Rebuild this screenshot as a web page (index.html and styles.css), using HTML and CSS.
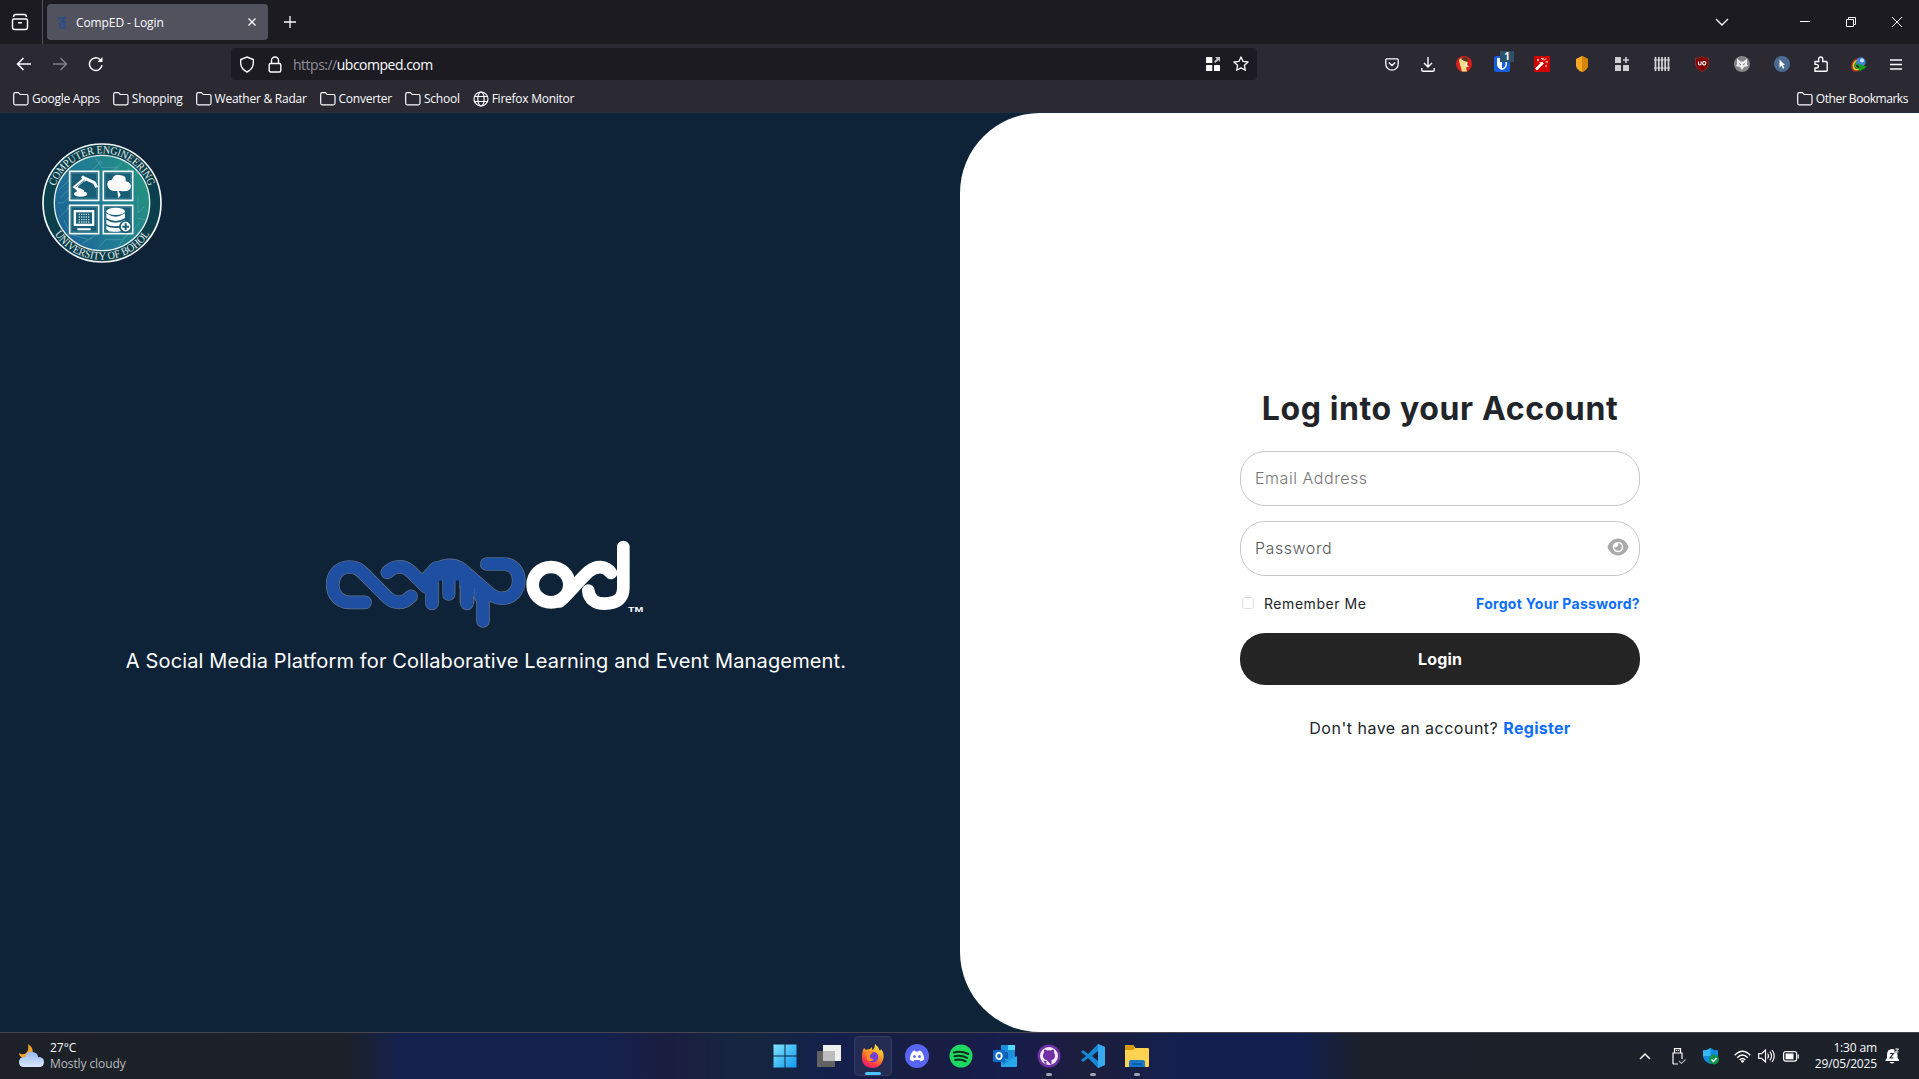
FILE: index.html
```html
<!DOCTYPE html>
<html lang="en">
<head>
<meta charset="utf-8">
<title>CompED - Login</title>
<link rel="stylesheet" href="styles.css">
</head>
<body>
<svg class="defs" aria-hidden="true">
  <symbol id="folder" viewBox="0 0 16 14"><path d="M.7 11.3V2.2Q.7.7 2.2.7h3.2l1.8 1.8h6.3q1.5 0 1.5 1.5v7.3q0 1.500-1.500 1.500H2.200Q.7 12.800.7 11.300z" fill="none" stroke="currentColor" stroke-width="1.200"/></symbol>
</svg>

<header class="browser">
  <div class="tabstrip">
    <div class="firefox-view"><svg width="18" height="18" viewBox="0 0 18 18" fill="none" stroke="currentColor" stroke-width="1.500"><path d="M4 1.500h10M2.800 6h12.400q1.300 0 1.300 1.200v7q0 2.300-2.300 2.300H3.800q-2.300 0-2.300-2.300v-7Q1.500 6 2.800 6zM7 9.700h4M2.500 4q.3-2.500 2-2.500M15.500 4q-.3-2.500-2-2.500"/></svg></div>
    <div class="tab">
      <svg width="14" height="14" viewBox="0 0 14 14"><path d="M1 2h6l2-1 2 2-3 2 3 2-2 2 2 3-2 2-7-1 2-2-2-3 2-2z" fill="#2f4b86"/><path d="M3 3l3 2-3 2 4 2-2 2 5 1" stroke="#52525e" fill="none"/></svg>
      <span class="tab-title">CompED - Login</span>
      <svg width="8" height="8" viewBox="0 0 8 8" stroke="currentColor" stroke-width="1.300"><path d="M.5.5l7 7M7.500.5l-7 7"/></svg>
    </div>
    <svg class="new-tab" width="12" height="12" viewBox="0 0 12 12" stroke="currentColor" stroke-width="1.300"><path d="M0 6h12M6 0v12"/></svg>
    <div class="window-controls">
      <svg class="all-tabs" width="14" height="14" viewBox="0 0 14 14" fill="none" stroke="currentColor" stroke-width="1.400"><path d="M1 4l6 6 6-6"/></svg>
      <svg width="10" height="10" viewBox="0 0 10 10" stroke="currentColor"><path d="M0 4.500h10"/></svg>
      <svg width="10" height="10" viewBox="0 0 10 10" fill="none" stroke="currentColor"><path d="M.5 2.500h7v7h-7zM2.500 2.500v-2h7v7h-2"/></svg>
      <svg width="10" height="10" viewBox="0 0 10 10" stroke="currentColor"><path d="M0 0l10 10M10 0L0 10"/></svg>
    </div>
  </div>

  <div class="navbar">
    <div class="nav-buttons">
      <svg width="16" height="16" viewBox="0 0 16 16" fill="none" stroke="currentColor" stroke-width="1.500"><path d="M15 8H1.500M7.500 2l-6 6 6 6"/></svg>
      <svg class="disabled" width="16" height="16" viewBox="0 0 16 16" fill="none" stroke="currentColor" stroke-width="1.500"><path d="M1 8h13.500M8.500 2l6 6-6 6"/></svg>
      <svg width="16" height="16" viewBox="0 0 16 16" fill="none" stroke="currentColor" stroke-width="1.500"><path d="M14 9a6.300 6.300 0 1 1-2-5.500l1.500 1.500"/><path d="M14.500 1v5h-5z" fill="currentColor" stroke="none"/></svg>
    </div>
    <div class="urlbar">
      <svg width="16" height="17" viewBox="0 0 16 17" fill="none" stroke="currentColor" stroke-width="1.400"><path d="M8 1l6.300 2.500v4Q14 13 8 16 2 13 1.700 7.500v-4z"/></svg>
      <svg class="lock" width="14" height="17" viewBox="0 0 14 17" fill="none" stroke="currentColor" stroke-width="1.400"><rect x="1.200" y="7.500" width="11.600" height="8.500" rx="1.500"/><path d="M3.500 7.500V4.500a3.500 3.500 0 0 1 7 0v3"/></svg>
      <span class="url"><span class="scheme">https://</span>ubcomped.com</span>
      <svg class="apps" width="14" height="14" viewBox="0 0 14 14" fill="currentColor"><rect width="6.300" height="6" rx=".6"/><rect y="8" width="6.300" height="6" rx=".6"/><rect x="8" y="8" width="6" height="6" rx=".6"/><path d="M9 0h5v5l-1.700-1.700L9.300 6 8 4.800l2.700-3.100z" opacity=".75"/></svg>
      <svg width="16" height="16" viewBox="0 0 16 16" fill="none" stroke="currentColor" stroke-width="1.300" stroke-linejoin="round"><path d="M8 .9l2.100 4.500 5 .6-3.700 3.300 1 5L8 11.900l-4.400 2.400 1-5L.9 6l5-.6z"/></svg>
    </div>
    <div class="extensions">
      <span class="ext narrow"><svg width="14" height="13" viewBox="0 0 14 13" fill="none" stroke="currentColor" stroke-width="1.300"><path d="M2 .8h10q1.200 0 1.200 1.200v4a6.200 6.200 0 0 1-12.400 0V2Q.8.8 2 .8zM3.800 4.500L7 7.500l3.200-3"/></svg></span>
      <span class="ext narrow"><svg width="14" height="15" viewBox="0 0 14 15" fill="none" stroke="currentColor" stroke-width="1.400"><path d="M7 0v10M3 6l4 4 4-4M.8 11v2q0 1.200 1.200 1.200h10q1.200 0 1.200-1.200v-2"/></svg></span>
      <span class="ext narrow"><svg width="16" height="16" viewBox="0 0 16 16"><circle cx="8" cy="8" r="8" fill="#d91e1e"/><path d="M3 4q2-3 5-1.500l4 3-1 3 2 2-3 1 1 4H6L4 9z" fill="#f2dc86"/><path d="M5 3q4-4 7 0v3L8 5z" fill="#5a3a1c"/><path d="M8 8l3-1v4z" fill="#e9f2f5"/></svg></span>
      <span class="ext bitwarden"><svg width="16" height="16" viewBox="0 0 16 16"><rect width="16" height="16" rx="2" fill="#175ddc"/><path d="M3 2h10v6q0 4-5 6-5-2-5-6z" fill="#fff"/><path d="M8 3.500h3.500V8q0 3-3.500 4.500z" fill="#175ddc"/></svg><span class="badge">1</span></span>
      <span class="ext"><svg width="16" height="16" viewBox="0 0 16 16"><path fill="#d00000" d="M0 0h16v16H0z"/><path d="M2 13.500L9 6.500" stroke="#fff" stroke-width="2.600"/><path d="M3 4h2M4 3v2M7 2.500h1.500M10 4.500l2-2M11.500 6H14M12 9v2M9 2v2M5.500 6l1 1" stroke="#fff"/></svg></span>
      <span class="ext"><svg width="14" height="16" viewBox="0 0 14 16"><path d="M7 0l6 3v7q-1 4-6 6-5-2-6-6V3z" fill="#f8a825"/><path d="M7 0l6 3v7q-1 4-6 6z" fill="#d78506"/></svg></span>
      <span class="ext"><svg width="14" height="14" viewBox="0 0 14 14" fill="#cfcfd3"><rect width="6" height="6" rx=".5"/><rect y="8" width="6" height="6" rx=".5"/><rect x="8" y="8" width="6" height="6" rx=".5"/><path d="M10.200 0h1.600v2.200H14v1.600h-2.200V6h-1.600V3.800H8V2.200h2.200z"/></svg></span>
      <span class="ext"><svg width="16" height="14" viewBox="0 0 16 14" stroke="#d4d4d8"><path d="M1.500 0v14M4.800 0v14M8 0v14M11.200 0v14M14.500 0v14" stroke-width="1.700"/><path d="M0 3h16M0 11h16" stroke-width="1.100"/></svg></span>
      <span class="ext"><svg width="14" height="16" viewBox="0 0 14 16"><path d="M7 .5Q10 2.500 13.500 2v6.500Q13 13 7 15.500 1 13 .5 8.500V2Q4 2.500 7 .5z" fill="#800000" stroke="#8f3a3a" stroke-width=".7"/><path d="M3.500 5.500v2.300q0 1.200 1.300 1.200t1.300-1.200V5.500" fill="none" stroke="#fff" stroke-width="1.100"/><rect x="7.700" y="5.600" width="3.100" height="3.300" rx="1.300" fill="none" stroke="#fff" stroke-width="1.100"/></svg></span>
      <span class="ext"><svg width="16" height="16" viewBox="0 0 16 16"><circle cx="8" cy="8" r="8" fill="#858588"/><path d="M3 2.500l3.500 3h3l3.500-3v6l1 1.500-4 1-2 3-2-3-4-1 1-1.500z" fill="#ededed"/><path d="M5 7.500l2 1.500M11 7.500L9 9" stroke="#777"/></svg></span>
      <span class="ext"><svg width="16" height="16" viewBox="0 0 16 16"><circle cx="8" cy="8" r="8" fill="#4c6b93"/><path d="M5.500 3.500l5.500 5.500H8.900l1.500 3-1.500.7-1.400-2.900-2 1.700z" fill="#fff"/></svg></span>
      <span class="ext mid"><svg width="14" height="16" viewBox="0 0 14 16" fill="none" stroke="currentColor" stroke-width="1.400"><path d="M1 5.500h3.700V3a2 2 0 0 1 4 0v2.500H12q1.200 0 1.200 1.200v7.600q0 1-1 1H1v-3.300h1.500a1.800 1.800 0 0 0 0-3.600H1z"/></svg></span>
      <span class="ext mid"><svg width="16" height="15" viewBox="0 0 16 15"><path d="M8 13Q0 16 1 8 2 2 8 2" fill="none" stroke="#c03025" stroke-width="1.500"/><path d="M8 12Q2 14 2.500 8 3 4 8 3" fill="none" stroke="#e8d32a" stroke-width="1.700"/><path d="M9 11.500Q4 12 4.500 8 5 5 8 4" fill="none" stroke="#2ba82e" stroke-width="1.500"/><circle cx="10" cy="5" r="4.700" fill="#3f82d8"/><circle cx="11" cy="3.500" r="2" fill="#cfe6f5"/><path d="M6 6.500l10 3.200-8 5 1-3.500z" fill="#12a318"/></svg></span>
      <span class="ext menu"><svg width="12" height="11" viewBox="0 0 12 11" stroke="currentColor" stroke-width="1.300"><path d="M0 1h12M0 5.500h12M0 10h12"/></svg></span>
    </div>
  </div>

  <nav class="bookmarks">
    <a class="bookmark"><svg width="16" height="14"><use href="#folder"/></svg><span>Google Apps</span></a>
    <a class="bookmark"><svg width="16" height="14"><use href="#folder"/></svg><span>Shopping</span></a>
    <a class="bookmark"><svg width="16" height="14"><use href="#folder"/></svg><span>Weather &amp; Radar</span></a>
    <a class="bookmark"><svg width="16" height="14"><use href="#folder"/></svg><span>Converter</span></a>
    <a class="bookmark"><svg width="16" height="14"><use href="#folder"/></svg><span>School</span></a>
    <a class="bookmark"><svg width="16" height="16" viewBox="0 0 16 16" fill="none" stroke="currentColor" stroke-width="1.200"><circle cx="8" cy="8" r="7"/><ellipse cx="8" cy="8" rx="3.200" ry="7"/><path d="M1.500 5.500h13M1.500 10.500h13"/></svg><span>Firefox Monitor</span></a>
    <a class="bookmark other"><svg width="16" height="14"><use href="#folder"/></svg><span>Other Bookmarks</span></a>
  </nav>
</header>

<main class="page">
  <section class="intro">
    <svg class="seal" width="120" height="120" viewBox="-180 -180 360 360">
      <defs>
        <linearGradient id="sealFill" x1="0" y1=".7" x2="1" y2=".3"><stop offset="0" stop-color="#1c6397"/><stop offset=".5" stop-color="#207e94"/><stop offset="1" stop-color="#24917e"/></linearGradient>
        <path id="arcTop" d="M-149 0A149 149 0 0 1 149 0"/>
        <path id="arcBottom" d="M-170 0A170 170 0 0 0 170 0"/>
      </defs>
      <circle r="177" fill="#0b3f4b" stroke="#f2f7f7" stroke-width="5"/>
      <circle r="143" fill="url(#sealFill)" stroke="#e6f1f1" stroke-width="4"/>
      <g fill="none" stroke="#63adb5" stroke-width="2" opacity=".7"><path d="M-128-40l50-50h40l30-30M-20-136l20 30h40M60-120l-30 25M80-105v40l25-25M-135 0h18l20-20M-130 45l30-30M108-20v50l20-20M112 60l-50 50H10l-20 24M-90 95l50 15 30-20M-60 122l30-18M50 128l30-38M-125-15l25-25M-100 80l-15-30M104 45l25 5"/><circle cx="43" cy="-106" r="4"/><circle cx="-5" cy="-122" r="4"/><circle cx="106" cy="-92" r="4"/><circle cx="-100" cy="15" r="4"/></g>
      <g transform="translate(-3 -2)">
        <g fill="#185e77" stroke="#f6fafa" stroke-width="5"><path d="M-94-93h87v87h-87zM7-93h88v87H7zM-94 9h87v85h-87zM7 9h88v85H7z"/></g>
        <g fill="none" stroke="#4a97a5" stroke-width="1.500"><path d="M-88-87h75v75h-75zM13-87h76v75H13zM-88 15h75v73h-75zM13 15h76v73H13z"/></g>
        <g fill="#fff"><ellipse cx="-61" cy="-25" rx="20" ry="8"/><path d="M-73-28v-8l10-6 12 6v8z"/><path d="M20-48q-5-19 13-20 6-20 26-13 18 0 15 18 19 3 15 20-6 13-30 9h-6l6 12-7 10-3-22q-26 2-29-14z"/><path d="M-82 23h62v48h-62zM-71 78h40v6h-40z"/></g>
        <path d="M-63-35l-15-11 30-26 28 13 7 14M-57-78l12 13" fill="none" stroke="#fff" stroke-width="9"/>
        <path d="M-76-46l28-22" stroke="#185e77" stroke-width="2"/>
        <path d="M-75 30h48v34h-48z" fill="#185e77"/><path d="M-67 36h33M-67 44h33M-67 52h33M-67 59h33" stroke="#bad5db" stroke-width="4" stroke-dasharray="4 3"/>
        <g fill="#fff"><ellipse cx="44" cy="27" rx="28" ry="11"/><path d="M16 33q28 20 56 0v14q-28 18-56 0zM16 52q28 18 56 0l-9 17q-30 7-47-3zM16 71q18 9 38 5l7 10q-35 7-45-5z"/></g>
        <circle cx="74" cy="73" r="17" fill="#fff" stroke="#185e77" stroke-width="5"/><path d="M64 73h20M74 63v20" stroke="#185e77" stroke-width="6"/>
      </g>
      <g class="seal-text"><text><textPath href="#arcTop" startOffset="50%" text-anchor="middle" textLength="366" lengthAdjust="spacingAndGlyphs">COMPUTER ENGINEERING</textPath></text><text><textPath href="#arcBottom" startOffset="50%" text-anchor="middle" textLength="338" lengthAdjust="spacingAndGlyphs">UNIVERSITY OF BOHOL</textPath></text></g>
    </svg>
    <div class="brand">
      <svg class="wordmark" width="324" height="92" viewBox="40 55 972 276" fill="none" stroke-linecap="round" stroke-linejoin="round">
        <defs>
          <g id="comp">
            <path d="M166 248H120C52 248 52 142 120 142C142 142 151 151 162 162L220 220C234 234 244 248 268 248C286 248 291 241 304 230"/>
            <path d="M233 158C250 139 278 137 296 150C312 162 330 184 350 202"/>
            <path d="M367 251V182C375 150 395 137 420 137C448 137 461 154 478 168L535 218C555 235 570 239 591 234C640 222 642 133 580 133H531"/>
            <path d="M417 145V223M472 170V251M520 215V304"/>
            <path d="M352 175L380 145H450L505 195L520 240L490 195L400 165z"/>
          </g>
        </defs>
        <use href="#comp" stroke="#657287" stroke-width="41"/>
        <use href="#comp" stroke="#1e4fa3" stroke-width="37"/>
        <path d="M393 187v50M443 187v50" stroke="#0e2337" stroke-width="11"/>
        <path d="M399 184v38M436 184v38M387 190v58M450 190v58M494 206v42" stroke="#657287" stroke-width="1.500"/>
        <g stroke="#fff" stroke-width="38">
          <ellipse cx="724" cy="195" rx="55" ry="53"/>
          <path d="M750 245C770 230 810 180 838 155C860 137 888 138 904 160M836 213C838 239 858 252 885 252C922 252 941 236 941 205V82"/>
        </g>
        <text class="tm" x="955" y="277" textLength="46" lengthAdjust="spacingAndGlyphs">TM</text>
      </svg>
      <p class="tagline">A Social Media Platform for Collaborative Learning and Event Management.</p>
    </div>
  </section>

  <section class="login-panel">
    <form class="login">
      <h1>Log into your Account</h1>
      <div class="field email">Email Address</div>
      <div class="field password"><span>Password</span>
        <svg width="22" height="18" viewBox="0 0 22 18"><path d="M11 .5c5 0 9 4 10.500 8.500C20 13.500 16 17.500 11 17.500S2 13.500.5 9C2 4.500 6 .5 11 .5z" fill="#aaa"/><circle cx="11" cy="9" r="5.300" fill="#fff"/><path d="M11 5.300a3.700 3.700 0 1 1-3.700 3.700q2.700.8 3.700-1.200.4-1.200 0-2.500z" fill="#aaa"/></svg>
      </div>
      <div class="options"><label class="remember"><span class="checkbox"></span><span>Remember Me</span></label><a class="link forgot">Forgot Your Password?</a></div>
      <button type="button" class="submit">Login</button>
      <p class="register">Don't have an account? <a class="link">Register</a></p>
    </form>
  </section>
</main>

<footer class="taskbar">
  <div class="weather">
    <svg width="25" height="25" viewBox="0 0 25 25"><defs><linearGradient id="cloud" x1="0" y1="0" x2="0" y2="1"><stop offset="0" stop-color="#94b9f7"/><stop offset="1" stop-color="#dce8fc"/></linearGradient></defs><path d="M9 0q7 5 4 11l-7 4Q0 13 0 9q5 3 8-1 2-3 1-8z" fill="#f4a32a"/><path d="M5 23q-5 0-5-5t6-5q2-6 8-5 5 1 5 5 6 0 6 5t-5 5z" fill="url(#cloud)"/></svg>
    <div><div class="temp">27°C</div><div class="sky">Mostly cloudy</div></div>
  </div>
  <div class="dock">
    <span class="app"><svg width="24" height="24" viewBox="0 0 24 24"><defs><linearGradient id="win" x1="0" y1="0" x2="1" y2="1"><stop offset="0" stop-color="#7fe4fc"/><stop offset="1" stop-color="#0f97ef"/></linearGradient></defs><path d="M.5.500h11v11H.500zM12.500.500h11v11h-11zM.500 12.500h11v11H.500zM12.500 12.500h11v11h-11z" fill="url(#win)"/></svg></span>
    <span class="app"><svg width="24" height="22" viewBox="0 0 24 22"><path d="M0 6h18v16H0z" fill="#626262"/><path d="M6 0h18v16H6z" fill="#f0f0f0"/><path d="M6 6h12v10H6z" fill="#bdbdbd"/></svg></span>
    <span class="app active"><svg width="24" height="24" viewBox="0 0 24 24"><defs><linearGradient id="fx" x1=".8" y1="0" x2=".3" y2="1"><stop offset="0" stop-color="#fff04a"/><stop offset=".45" stop-color="#ff9a22"/><stop offset=".75" stop-color="#ff4340"/><stop offset="1" stop-color="#e81a70"/></linearGradient></defs><path d="M3 4l2 2q2-1 4-1l2-2v3q3-1 3-6 4 3 5 7l1-2q4 5 2 11-3 8-10 8Q1 24 1 13 1 7 3 4z" fill="url(#fx)"/><circle cx="12" cy="13" r="5.300" fill="#713fd3"/><path d="M5 8q5-2 7 1l-3 2q-1 4 4 4-3 4-7 1z" fill="#ff8b27"/></svg></span>
    <span class="app"><svg width="24" height="24" viewBox="0 0 24 24"><circle cx="12" cy="12" r="12" fill="#5865f2"/><path d="M8 7l2-.6.6 1.200h2.800l.6-1.200 2 .6q3 3 3.200 8.500-1.700 1.500-3.700 2l-1-1.500h-5l-1 1.500q-2-.5-3.700-2Q5 10 8 7z" fill="#fff"/><ellipse cx="9.500" cy="12.500" rx="1.300" ry="1.500" fill="#5865f2"/><ellipse cx="14.500" cy="12.500" rx="1.300" ry="1.500" fill="#5865f2"/></svg></span>
    <span class="app"><svg width="24" height="24" viewBox="0 0 24 24"><circle cx="12" cy="12" r="11.500" fill="#1ed760"/><path d="M4.800 8.500q7.500-2.200 14.500 1.500M5.500 12.300q6.500-1.800 12.500 1.500M6.200 16q5.500-1.300 10.500 1.300" fill="none" stroke="#132b1c" stroke-width="2" stroke-linecap="round"/></svg></span>
    <span class="app"><svg width="24" height="22" viewBox="0 0 24 22"><path fill="#1d8fdc" d="M8 0h14v15H8z"/><path fill="#50d9ff" d="M15 0h7v5h-7z"/><path fill="#0a60ae" d="M8 7h7v7H8z"/><path fill="#28a8ea" d="M8 12l8 3 8-4v10q0 1-1 1H8z"/><path fill="#1389d6" d="M24 11L10 20l-2-6 8 2z"/><rect y="5" width="12" height="12" rx="1" fill="#0f6cc4"/><ellipse cx="6" cy="11" rx="2.700" ry="3.100" fill="none" stroke="#fff" stroke-width="1.700"/></svg></span>
    <span class="app running"><svg width="24" height="24" viewBox="0 0 24 24"><circle cx="12" cy="12" r="11.500" fill="#7130a4"/><circle cx="12" cy="12" r="9" fill="#f4ebf8"/><path d="M9.500 21v-4q-4 .5-5-2.500M9.500 16Q6 15.500 6 11.500q0-2 1.200-3.200Q6.800 7 7.300 5.500q1.700 0 2.900 1 1.800-.5 3.600 0 1.200-1 2.900-1 .5 1.500.1 2.800Q18 9.500 18 11.500q0 4-3.500 4.500v5" fill="#7130a4"/></svg></span>
    <span class="app running"><svg width="24" height="24" viewBox="0 0 24 24"><path d="M17 0l7 3v18l-7 3L7 14l-5 4-2-2 5-4-5-4 2-2 5 4zM17 7l-6 5 6 5z" fill="#1587d1" fill-rule="evenodd"/><path d="M17 0l7 3v18l-7 3z" fill="#38a9ee"/></svg></span>
    <span class="app running"><svg width="24" height="22" viewBox="0 0 24 22"><path d="M0 1q0-1 1-1h7l2.500 3H23q1 0 1 1v17q0 1-1 1H0z" fill="#ffd252"/><path d="M0 1q0-1 1-1h7l2 3-2 2H0z" fill="#d89b09"/><path d="M4 22v-5q0-2 2-2h12q2 0 2 2v5z" fill="#1876c7"/><path d="M7 19h10" stroke="#0d5ba4" stroke-width="2"/></svg></span>
  </div>
  <div class="tray">
    <svg class="chevron" width="12" height="8" viewBox="0 0 12 8" fill="none" stroke="currentColor" stroke-width="1.500"><path d="M1 7l5-5 5 5"/></svg>
    <svg class="usb" width="14" height="17" viewBox="0 0 14 17" fill="none" stroke="currentColor" stroke-width="1.200"><path d="M2.500 5V.6h6V5M6 16H2q-1 0-1-1V5h9v6M4.500 2v1M6.500 2v1"/><path d="M7 13l2.500 2.500 4-4" opacity=".6"/></svg>
    <svg class="defender" width="16" height="17" viewBox="0 0 16 17"><path d="M7.500 0Q11 2.500 15 2.500V8q0 5-7.500 8Q0 13 0 8V2.500Q4 2.500 7.500 0z" fill="#0f8ce0"/><path d="M7.500 0Q4 2.500 0 2.500V8h7.500z" fill="#36b7f6"/><circle cx="11" cy="11.500" r="5" fill="#119447"/><path d="M8.500 11.500l2 2 3-3.500" fill="none" stroke="#fff" stroke-width="1.300"/></svg>
    <svg class="wifi" width="17" height="13" viewBox="0 0 17 13" fill="none" stroke="currentColor" stroke-width="1.500"><path d="M.7 5.200q7.800-8 15.600 0M3.200 7.700q5.300-5.400 10.600 0M5.700 10q2.800-3 5.600 0"/><circle cx="8.500" cy="11.300" r="1.400" fill="currentColor" stroke="none"/></svg>
    <svg class="volume" width="17" height="14" viewBox="0 0 17 14" fill="none" stroke="currentColor" stroke-width="1.200"><path d="M.7 4.700H3.500L7.500 1v12L3.500 9.300H.7zM9.500 4.500q2 2.500 0 5M11.800 2.700q3.500 4.300 0 8.600M14 1q4.500 6 0 12"/></svg>
    <svg class="battery" width="16" height="11" viewBox="0 0 16 11" fill="none" stroke="currentColor" stroke-width="1.200"><rect x=".6" y=".6" width="13" height="9.500" rx="2"/><path d="M15.200 3.500v4"/><path d="M2.500 2.500h8v5.800h-8z" fill="currentColor" stroke="none"/></svg>
    <div class="clock"><div>1:30 am</div><div>29/05/2025</div></div>
    <svg class="bell" width="15" height="16" viewBox="0 0 15 16"><path d="M2 7q0-6 5-6 5.500 0 5.500 6v3l1.500 2v1H.5v-1L2 10z" fill="#fff"/><path d="M4.500 14h5q-2.500 3-5 0z" fill="#fff"/><path d="M5 5.500h3.500l-3.500 4.500h3.500" fill="none" stroke="#20242c" stroke-width="1.100"/><path d="M9.500 0H15v4.500H9.500z" fill="#20242c"/><path d="M10.500 1h3l-3 3h3" fill="none" stroke="#fff"/></svg>
  </div>
</footer>
</body>
</html>
```
FILE: styles.css
```css
* { box-sizing: border-box; }

body {
  margin: 0;
  width: 1919px;
  height: 1079px;
  overflow: hidden;
  display: flex;
  flex-direction: column;
  font-family: "Open Sans", sans-serif;
  color: #fbfbfe;
}

svg { display: block; flex: none; }
p, h1 { margin: 0; }
.defs { display: none; }

/* Browser chrome */
.browser {
  height: 113px;
  background: #2b2a33;
  border-bottom: 1px solid #22303e;
  font-size: 12px;
  letter-spacing: -.25px;
}

.tabstrip {
  height: 44px;
  display: flex;
  align-items: center;
  background: #1c1b22;
}

.firefox-view {
  width: 43px;
  height: 44px;
  padding-left: 11px;
  display: flex;
  align-items: center;
  border-right: 1px solid #52525a;
}

.tab {
  width: 221px;
  height: 36px;
  margin-left: 4px;
  padding: 0 12px 0 9px;
  display: flex;
  align-items: center;
  gap: 6px;
  border-radius: 4px;
  background: #52525e;
}

.tab-title { flex: 1; letter-spacing: -.1px; }
.new-tab { margin-left: 16px; }

.window-controls {
  margin-left: auto;
  padding-right: 17px;
  display: flex;
  align-items: center;
  gap: 36px;
}

.all-tabs { margin-right: 35px; }

.navbar {
  height: 40px;
  display: flex;
  align-items: center;
}

.nav-buttons {
  width: 231px;
  padding-left: 16px;
  display: flex;
  gap: 20px;
}

.disabled { opacity: .4; }

.urlbar {
  width: 1026px;
  height: 32px;
  padding: 0 8px;
  display: flex;
  align-items: center;
  border-radius: 4px;
  background: #1c1b22;
  font-size: 14px;
  letter-spacing: -.5px;
}

.lock { margin-left: 13px; }
.url { flex: 1; padding-left: 11px; }
.scheme { color: #8f8f9a; }
.apps { margin-right: 13px; }

.extensions {
  margin-left: auto;
  padding-right: 5px;
  display: flex;
  align-items: center;
}

.ext {
  width: 40px;
  height: 20px;
  display: flex;
  align-items: center;
  justify-content: center;
}

.narrow, .menu { width: 36px; }
.mid { width: 38px; }
.bitwarden { position: relative; }

.badge {
  position: absolute;
  left: 18px;
  top: -3px;
  width: 14px;
  height: 11px;
  background: #2b5269;
  font: bold 10px/11px "Open Sans", sans-serif;
  text-align: center;
}

.bookmarks {
  height: 29px;
  padding: 0 11px 0 13px;
  display: flex;
  align-items: center;
  gap: 13px;
}

.bookmark {
  display: flex;
  align-items: center;
  gap: 3px;
}

.other { margin-left: auto; letter-spacing: -.45px; }

/* Login page */
.page {
  height: 919px;
  display: flex;
  background: #0e2337;
  font-family: Inter, "Open Sans", sans-serif;
}

.intro {
  width: 960px;
  padding: 30px 0 0 42px;
}

.seal-text {
  font: 33px "Liberation Serif", serif;
  fill: #e5eeee;
}

.brand {
  width: 888px;
  padding-top: 275px;
  display: flex;
  flex-direction: column;
  align-items: center;
}

.wordmark { margin-right: 2px; }

.tm {
  font: bold 20px "Liberation Sans", sans-serif;
  fill: #fff;
}

.tagline {
  margin-top: 16px;
  font-size: 20px;
  line-height: 30px;
  letter-spacing: .14px;
  color: #fff;
  white-space: nowrap;
}

.login-panel {
  width: 959px;
  padding-left: 280px;
  border-radius: 80px 0 0 80px;
  background: #fff;
  color: #212529;
}

.login {
  width: 400px;
  padding-top: 272px;
}

h1 {
  height: 48px;
  font-size: 32px;
  line-height: 48px;
  letter-spacing: .62px;
  text-align: center;
}

.field {
  height: 55px;
  padding: 0 14px 2px;
  display: flex;
  align-items: center;
  justify-content: space-between;
  border: 1px solid #c8c8c8;
  border-radius: 25px;
  font-size: 16px;
  font-weight: 300;
  letter-spacing: .55px;
}

.email { margin-top: 18px; color: #757575; }
.password { margin-top: 15px; padding-right: 10px; color: #55595c; }
.password svg { margin-top: -1px; }

.options {
  height: 21px;
  margin-top: 17px;
  display: flex;
  justify-content: space-between;
  font-size: 14px;
  line-height: 21px;
}

.remember {
  display: flex;
  gap: 10px;
  letter-spacing: .55px;
}

.checkbox {
  width: 12px;
  height: 12px;
  margin: 4px 0 0 2px;
  border: 1px solid #dee2e6;
  border-radius: 3px;
}

.link { color: #0d6efd; font-weight: 700; }
.forgot { letter-spacing: .3px; }

.submit {
  display: block;
  width: 400px;
  height: 52px;
  margin-top: 19px;
  border: 0;
  border-radius: 25px;
  background: #242424;
  color: #fff;
  font: 700 16px Inter, "Open Sans", sans-serif;
  letter-spacing: .15px;
}

.register {
  margin-top: 31px;
  font-size: 16px;
  line-height: 24px;
  letter-spacing: .5px;
  text-align: center;
}

.register .link { letter-spacing: .3px; }

/* Taskbar */
.taskbar {
  height: 47px;
  display: grid;
  grid-template-columns: 763px 396px 1fr;
  align-items: center;
  border-top: 1px solid #44454f;
  background: linear-gradient(90deg, #1d2127 0, #1c2129 345px, #14214d 400px, #14214d 600px, #1b1d40 670px, #14273f 750px, #141f4c 840px, #191d41 920px, #171d4c 1000px, #1c1e3b 1090px, #13204f 1180px, #13204f 1300px, #1b202a 1360px, #1c2129 100%);
  font-size: 12px;
}

.weather {
  padding-left: 19px;
  display: flex;
  align-items: center;
  gap: 6px;
  line-height: 16px;
}

.sky { color: #b9bcc0; letter-spacing: -.1px; }

.dock { display: flex; }

.app {
  position: relative;
  width: 44px;
  height: 40px;
  display: flex;
  align-items: center;
  justify-content: center;
}

.active {
  width: 38px;
  margin: 0 3px;
  border: 1px solid #343b61;
  border-radius: 4px;
  background: #252c54;
}

.active::after, .running::after {
  content: "";
  position: absolute;
  bottom: 0;
  height: 3px;
  border-radius: 2px;
}

.active::after { width: 16px; background: #4cc2ff; }
.running::after { width: 6px; background: #a0a2ac; }

.tray {
  padding-right: 19px;
  display: flex;
  align-items: center;
  justify-content: flex-end;
}

.usb { margin-left: 21px; }
.defender { margin-left: 17px; }
.wifi { margin-left: 15px; }
.volume { margin-left: 7px; }
.battery { margin-left: 8px; }

.clock {
  width: 78px;
  text-align: right;
  line-height: 16px;
  letter-spacing: -.15px;
}

.bell { margin-left: 8px; }
```
